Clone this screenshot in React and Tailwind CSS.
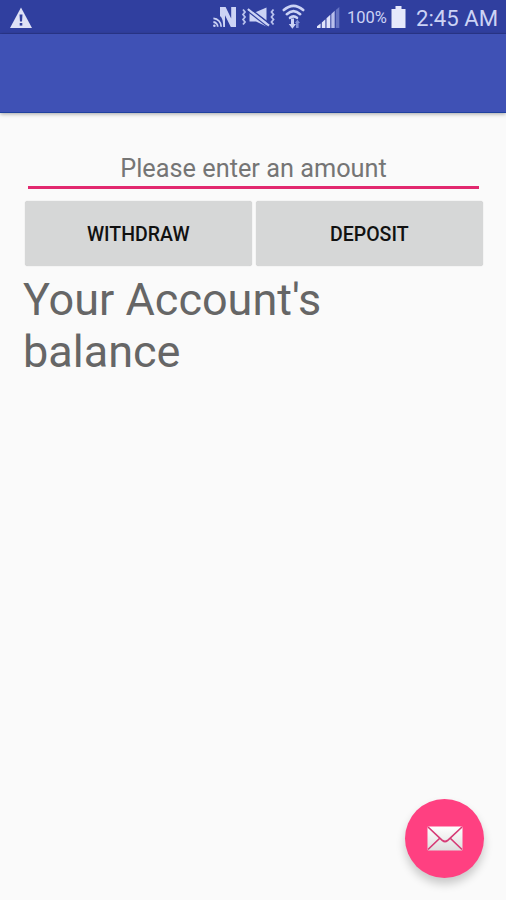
function WarningIcon() {
  return (
    <svg width="24" height="22" viewBox="0 0 24 22" className="block shrink-0">
      <path d="M12 0.6 L23 21 H1 Z" fill="#dfe2f6" />
      <path d="M10.5 7.5 h3 l-.5 7 h-2 z" fill="#303f9f" />
      <rect x="10.7" y="16" width="2.6" height="2.6" fill="#303f9f" />
    </svg>
  );
}

function NfcIcon() {
  return (
    <svg width="25" height="22" viewBox="0 0 25 22" className="block shrink-0">
      <path d="M7 1 h5.6 l5.6 11.5 V1 h4.8 v20 h-5.2 l-5.8 -11.8 V21 h-1.8 C10.2 15.5 9.5 12 7 10 Z" fill="#ccd3f5" />
      <g fill="none" stroke="#ccd3f5" strokeWidth="1.8">
        <path d="M0.4 12.4 a8.2 8.2 0 0 1 7.8 8.4" />
        <path d="M0.4 16 a4.8 4.8 0 0 1 4.3 4.8" />
      </g>
      <circle cx="1.4" cy="19.8" r="1.3" fill="#ccd3f5" />
    </svg>
  );
}

function VibrateMuteIcon() {
  return (
    <svg width="35" height="22" viewBox="0 0 35 22" className="block shrink-0">
      <g fill="none" stroke="#b9c2ed" strokeWidth="1.8">
        <path d="M2 2.5 l2 2.5 -2 2.5 2 2.5 -2 2.5 2 2.5 -2 2.5" />
        <path d="M32.5 2.5 l-2 2.5 2 2.5 -2 2.5 2 2.5 -2 2.5 2 2.5" />
      </g>
      <path d="M8.5 5 h6.5 l10.5 -4.5 v19 l-10.5 -5 h-6.5 z" fill="#ccd3f5" />
      <path d="M8 1 L29.5 17.4" stroke="#303f9f" strokeWidth="1.6" />
      <path d="M6.8 2.2 L28 18.6" stroke="#ccd3f5" strokeWidth="2.2" />
      <path d="M6 3.8 L26 19.4" stroke="#303f9f" strokeWidth="1.2" />
    </svg>
  );
}

function WifiIcon() {
  return (
    <svg width="24" height="26" viewBox="0 0 24 26" className="block shrink-0">
      <g fill="none" stroke="#ccd3f5" strokeWidth="2.6" strokeLinecap="round">
        <path d="M1.8 6 Q11.5 -2.4 21.2 6" />
        <path d="M4.8 10.2 Q11.5 4 18.2 10.2" />
        <path d="M8 13.8 Q11.5 10.8 15 13.8" />
      </g>
      <path d="M9 14.5 h3 v5.5 h2 l-3.6 4.8 -3.6 -4.8 h2.2 z" fill="#ccd3f5" />
      <path d="M14 24 v-5 h-1 l2.4 -3.5 2.6 3.5 h-1.4 v5 z" fill="#8290d6" />
    </svg>
  );
}

function SignalIcon() {
  return (
    <svg width="24" height="22" viewBox="0 0 24 22" className="block shrink-0">
      <path d="M0 21 v-1.8 l3.6 -2.8 v4.6 z" fill="#e0e4fa" />
      <path d="M4.8 21 v-5.6 l3.6 -3.2 v8.8 z" fill="#e0e4fa" />
      <path d="M9.5 21 v-9.8 l3.8 -3.4 v13.2 z" fill="#e0e4fa" />
      <path d="M14.3 21 v-14 l3.4 -3.2 v17.2 z" fill="#b8bfeb" />
      <path d="M18.8 21 v-18 l3.5 -3 v21 z" fill="#6573c2" />
    </svg>
  );
}

function BatteryIcon() {
  return (
    <svg width="15" height="22" viewBox="0 0 15 22" className="block shrink-0">
      <path d="M4.5 0 h6 v3 h4 v19 h-14 v-19 h4 z" fill="#e6e9fb" />
    </svg>
  );
}

function MailIcon() {
  return (
    <svg width="36" height="25" viewBox="0 0 36 25" className="block">
      <defs>
        <linearGradient id="paper" x1="0" y1="0" x2="0" y2="1">
          <stop offset="0" stopColor="#ffffff" />
          <stop offset="1" stopColor="#dedede" />
        </linearGradient>
      </defs>
      <rect x="0.5" y="0.5" width="35" height="24" rx="1" fill="url(#paper)" />
      <g fill="none" stroke="#d63b76" strokeWidth="1.7">
        <path d="M1 1 L15.5 14.5 Q18 16.5 20.5 14.5 L35 1" />
        <path d="M1 23.5 L13 12 M35 23.5 L23 12" />
      </g>
    </svg>
  );
}

function StatusBar() {
  return (
    <div className="h-[34px] shrink-0 bg-[#303f9f] border-b border-[#2b388f] flex items-start text-[#ccd3f5]">
      <div className="pl-[9px] pt-[7px]">
        <WarningIcon />
      </div>
      <div className="ml-auto flex items-start">
        <div className="pt-[6px]"><NfcIcon /></div>
        <div className="pt-[7px] ml-[3px]"><VibrateMuteIcon /></div>
        <div className="pt-[4px] ml-[6px]"><WifiIcon /></div>
        <div className="pt-[7px] ml-[11px]"><SignalIcon /></div>
        <span className="w-[42px] ml-[6px] mt-[8px] text-[16.5px] leading-[20px] whitespace-nowrap">100%</span>
        <div className="pt-[6px] ml-[2px]"><BatteryIcon /></div>
        <span className="w-[82px] ml-[10px] mr-[8px] mt-[5px] text-[22.2px] leading-[27px] whitespace-nowrap">2:45 AM</span>
      </div>
    </div>
  );
}

export default function App() {
  return (
    <div className="relative h-screen flex flex-col overflow-hidden bg-[#fafafa] font-['Roboto',sans-serif]">
      <StatusBar />
      <header className="h-[79px] shrink-0 bg-[#3f51b5] border-b border-[#1f419f] shadow-[0_1px_4px_rgba(0,0,0,0.35)]" />
      <main className="pl-[23px] pr-[22px] pt-[36px]">
        <div className="mx-[5px] h-[40px] border-b-[3px] border-[#e2286f]">
          <input
            type="text"
            placeholder="Please enter an amount"
            className="block w-full h-[38px] text-center text-[25.3px] text-[#666666] placeholder:text-[#757575] outline-none"
          />
        </div>
        <div className="mt-[12px] pl-[2px] pr-[1.5px] flex gap-[4.5px]">
          <button className="flex-1 h-[65px] pt-[2px] rounded-[3px] bg-[#d6d7d7] shadow-[0_0_1px_rgba(0,0,0,0.25)] text-[19.5px] font-medium text-[#111111]">
            WITHDRAW
          </button>
          <button className="flex-1 h-[65px] pt-[2px] rounded-[3px] bg-[#d6d7d7] shadow-[0_0_1px_rgba(0,0,0,0.25)] text-[19.5px] font-medium text-[#111111]">
            DEPOSIT
          </button>
        </div>
        <p className="mt-[8px] w-[340px] text-[45px] leading-[52px] text-[#666666]">
          Your Account's balance
        </p>
      </main>
      <button className="absolute right-[22px] bottom-[22px] size-[79px] rounded-full bg-[#ff4081] flex items-center justify-center shadow-[0_6px_10px_rgba(0,0,0,0.2)]">
        <MailIcon />
      </button>
    </div>
  );
}
